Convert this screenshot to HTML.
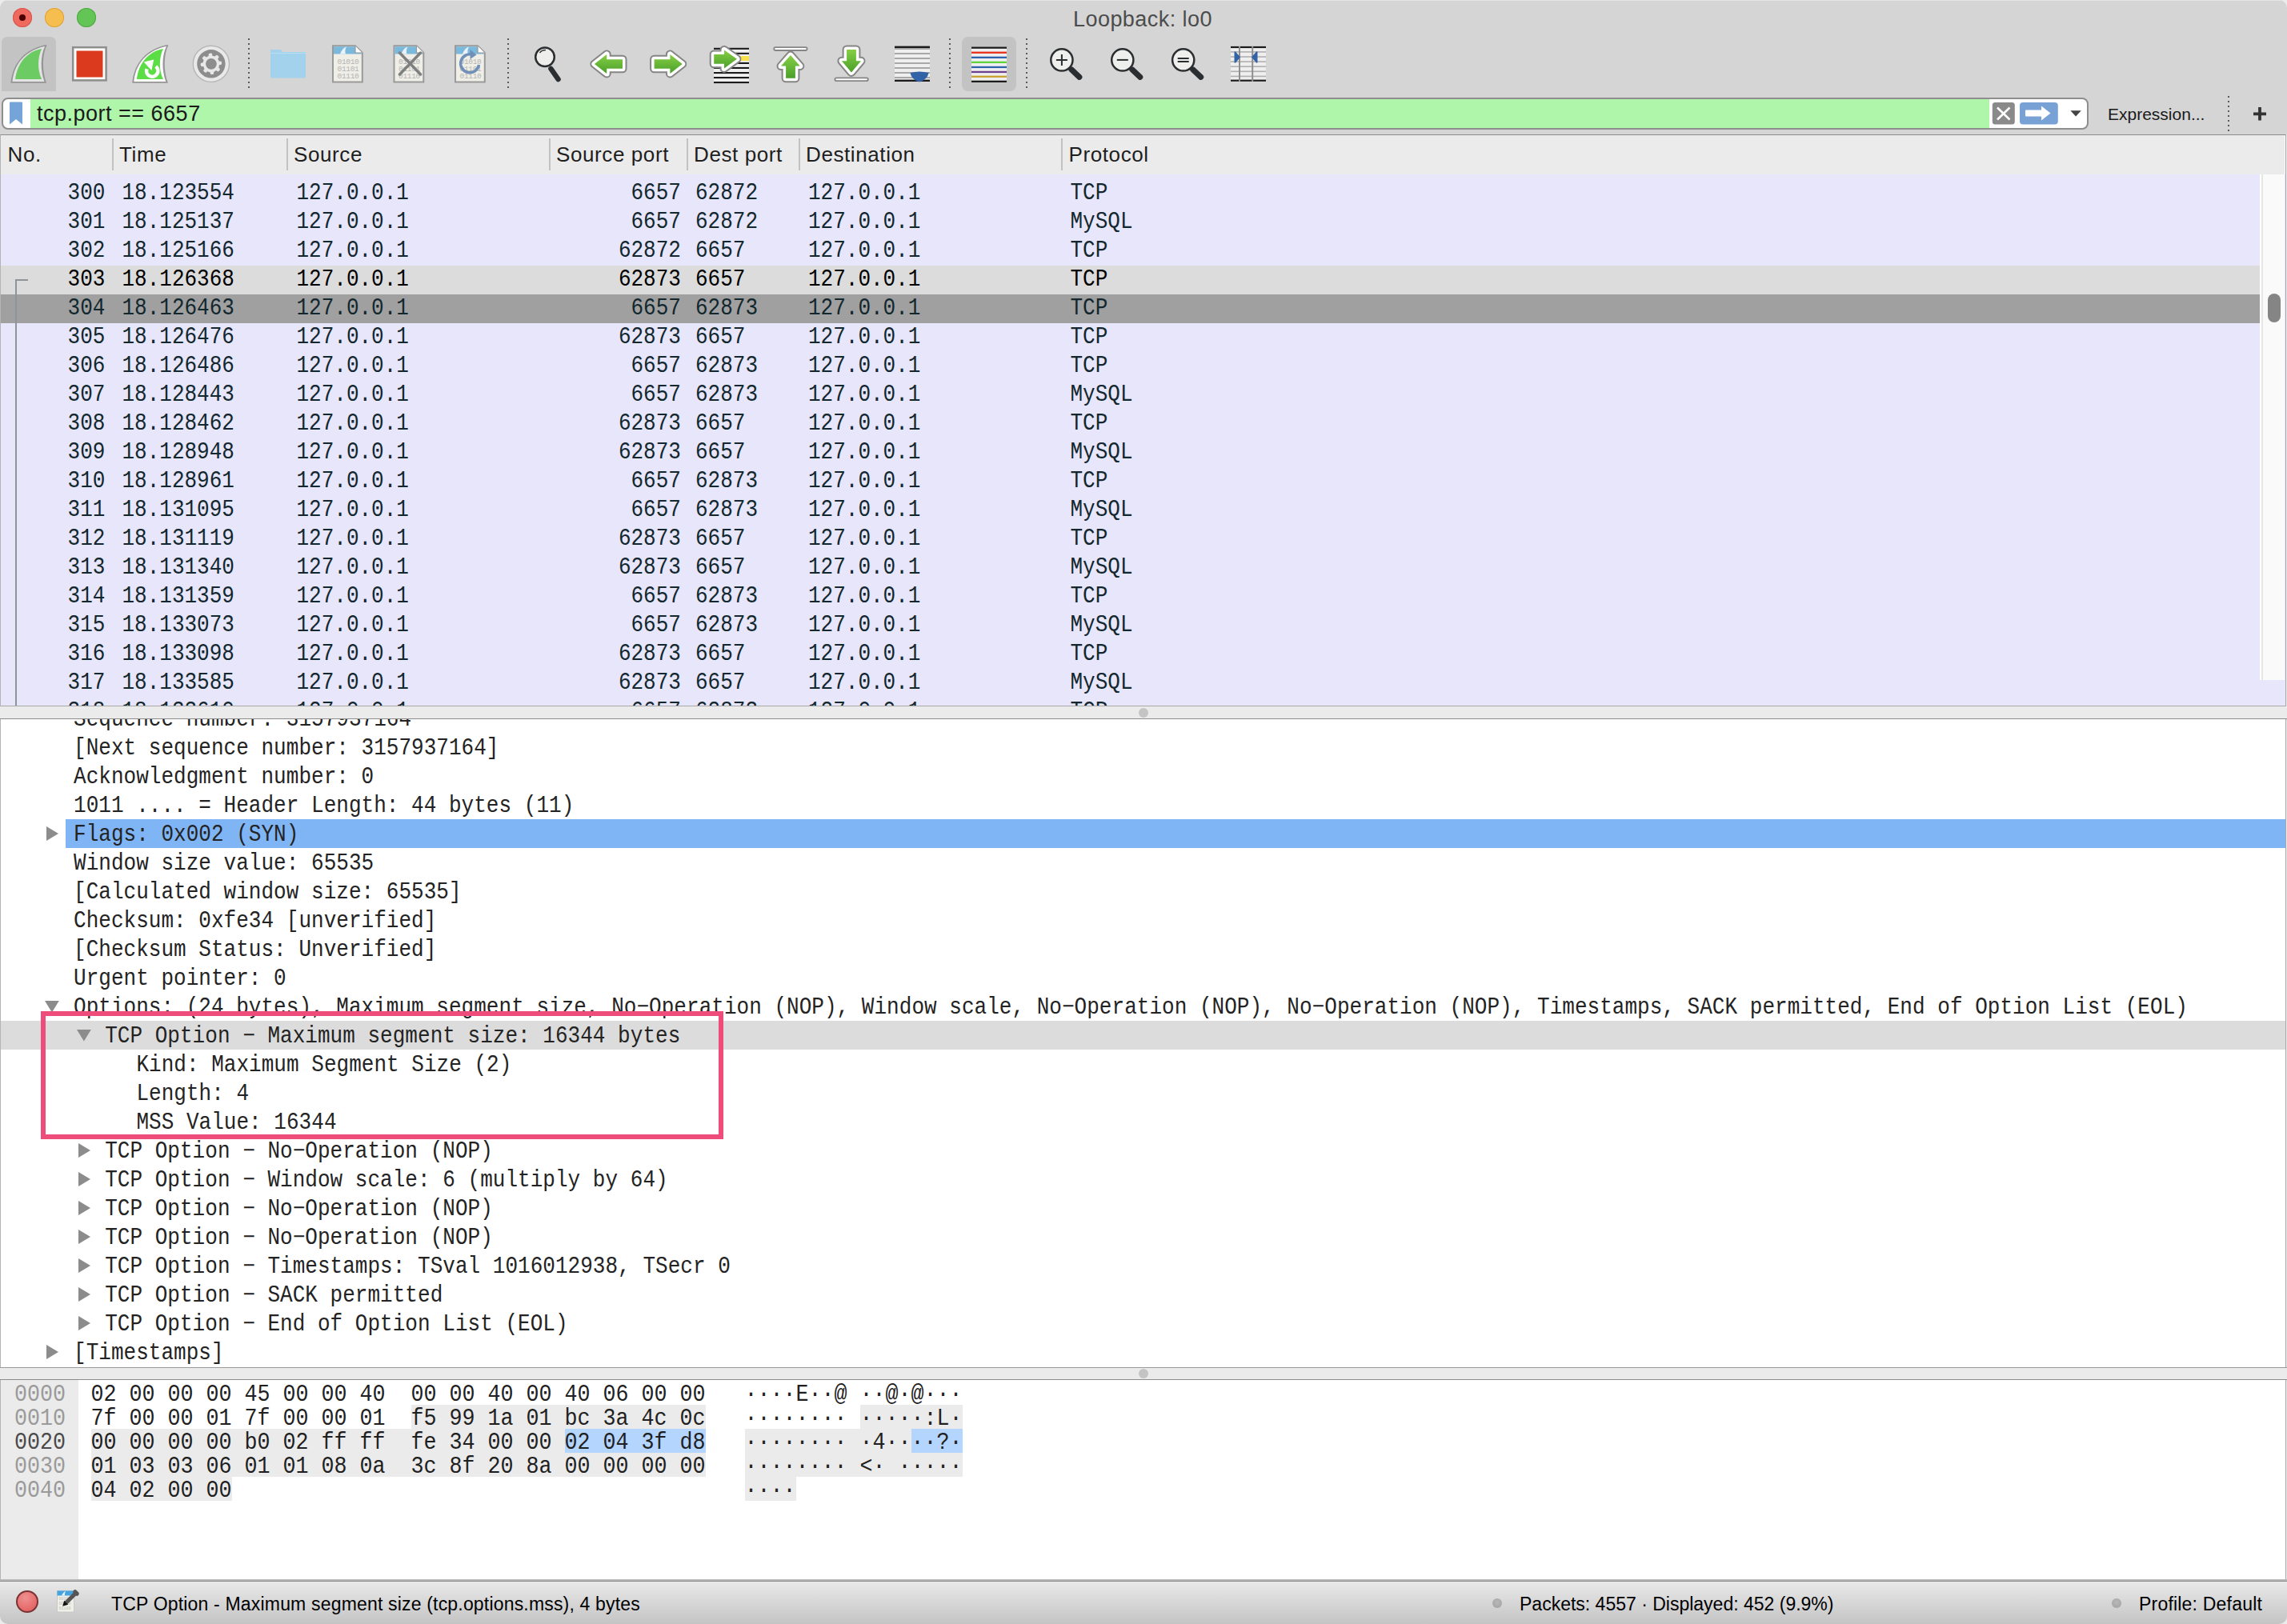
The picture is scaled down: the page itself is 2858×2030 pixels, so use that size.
<!DOCTYPE html>
<html><head><meta charset="utf-8"><title>Wireshark</title><style>
*{margin:0;padding:0;box-sizing:border-box}
html,body{width:2858px;height:2030px;overflow:hidden;background:#ececec}
body{position:relative;font-family:"Liberation Sans", sans-serif}
.a{position:absolute}
.m{font-family:"Liberation Mono", monospace;white-space:pre;position:absolute;font-size:26px;line-height:36px;transform-origin:0 24px;transform:scaleY(1.11);margin-top:2px}
.hx{font-size:26.67px;transform:scaleY(1.09);margin-top:4px}
.s{font-family:"Liberation Sans", sans-serif;white-space:pre;position:absolute}
</style></head>
<body>
<div class="a" style="left:0;top:0;width:2858px;height:168px;background:#d5d5d5;border-radius:10px 10px 0 0"></div>
<div class="a" style="left:8px;top:0;width:2842px;height:1px;background:#e6e6e6"></div>
<div class="a" style="left:16px;top:10px;width:24px;height:24px;border-radius:50%;background:#ee6a5f;box-shadow:inset 0 0 0 1px #d9534a"></div>
<div class="a" style="left:56px;top:10px;width:24px;height:24px;border-radius:50%;background:#f5be4f;box-shadow:inset 0 0 0 1px #dea236"></div>
<div class="a" style="left:96px;top:10px;width:24px;height:24px;border-radius:50%;background:#62c555;box-shadow:inset 0 0 0 1px #4ea843"></div>
<div class="a" style="left:24px;top:18px;width:8px;height:8px;border-radius:50%;background:#4d0000"></div>
<svg class="a" style="left:0;top:0" width="1600" height="122" viewBox="0 0 1600 122">
<defs><linearGradient id="gA" x1="0" y1="0" x2="0" y2="1"><stop offset="0" stop-color="#86cf45"/><stop offset="1" stop-color="#4a9f2a"/></linearGradient><linearGradient id="gF" x1="0" y1="0" x2="0" y2="1"><stop offset="0" stop-color="#7fd46f"/><stop offset="1" stop-color="#66c45b"/></linearGradient><pattern id="ln" width="10" height="6" patternUnits="userSpaceOnUse"><rect width="10" height="6" fill="#efefef"/><rect y="0" width="10" height="2" fill="#a8a8a8"/></pattern></defs>
<path d="M2 114 L2 54 Q2 46 10 46 L62 46 Q70 46 70 54 L70 114 Z" fill="#c3c3c3"/>
<rect x="1202" y="46" width="68" height="68" rx="8" fill="#c3c3c3"/>
<g transform="translate(-151.8,0)">
<path d="M165.3 103.7 C167 84 178 63 207.5 56.2 L210.5 56.2 C204.5 68 204 88 209.9 103.7 Z" fill="#959595"/><path d="M167.3 101.9 C169.2 83 180 64.2 207.2 57.9 L207.9 57.9 C202.3 69 202 88 207.3 101.9 Z" fill="#e4e4e4"/><path d="M170.9 99 C173 80 185 64 204 60.9 C198.5 72 198.5 88 204 99 Z" fill="#6dcb63"/>
</g>
<path d="M165.3 103.7 C167 84 178 63 207.5 56.2 L210.5 56.2 C204.5 68 204 88 209.9 103.7 Z" fill="#959595"/><path d="M167.3 101.9 C169.2 83 180 64.2 207.2 57.9 L207.9 57.9 C202.3 69 202 88 207.3 101.9 Z" fill="#ffffff"/><path d="M170.9 99 C173 80 185 64 204 60.9 C198.5 72 198.5 88 204 99 Z" fill="#5bdd45"/>
<path d="M183.5 86.2 A7.15 7.15 0 1 0 194.8 83.1" fill="none" stroke="#fff" stroke-width="4.5"/>
<path d="M179.7 77.4 L192.2 74.4 L189.4 88 Z" fill="#fff"/>
<rect x="91.2" y="59.2" width="41.4" height="41.2" fill="#fff" stroke="#8e8e8e" stroke-width="2.5"/>
<rect x="95.5" y="63.5" width="33" height="33" fill="#dc3a1f"/>
<circle cx="263.9" cy="79.8" r="22.6" fill="#e9e9e9" stroke="#b6b6b6" stroke-width="1.4"/>
<circle cx="263.9" cy="79.8" r="17.7" fill="#8d8d8d"/>
<rect x="261.6" y="66.6" width="4.6" height="5" rx="1.6" transform="rotate(-5 263.9 79.8)" fill="#e8e8e8"/><rect x="261.6" y="66.6" width="4.6" height="5" rx="1.6" transform="rotate(40 263.9 79.8)" fill="#e8e8e8"/><rect x="261.6" y="66.6" width="4.6" height="5" rx="1.6" transform="rotate(85 263.9 79.8)" fill="#e8e8e8"/><rect x="261.6" y="66.6" width="4.6" height="5" rx="1.6" transform="rotate(130 263.9 79.8)" fill="#e8e8e8"/><rect x="261.6" y="66.6" width="4.6" height="5" rx="1.6" transform="rotate(175 263.9 79.8)" fill="#e8e8e8"/><rect x="261.6" y="66.6" width="4.6" height="5" rx="1.6" transform="rotate(220 263.9 79.8)" fill="#e8e8e8"/><rect x="261.6" y="66.6" width="4.6" height="5" rx="1.6" transform="rotate(265 263.9 79.8)" fill="#e8e8e8"/><rect x="261.6" y="66.6" width="4.6" height="5" rx="1.6" transform="rotate(310 263.9 79.8)" fill="#e8e8e8"/>
<circle cx="263.9" cy="79.8" r="10.4" fill="#e8e8e8"/>
<circle cx="263.9" cy="79.8" r="6.9" fill="#8d8d8d"/>
<line x1="311" y1="48" x2="311" y2="110" stroke="#5a5a5a" stroke-width="2" stroke-dasharray="2 4"/>
<line x1="635" y1="48" x2="635" y2="110" stroke="#5a5a5a" stroke-width="2" stroke-dasharray="2 4"/>
<line x1="1187" y1="48" x2="1187" y2="110" stroke="#5a5a5a" stroke-width="2" stroke-dasharray="2 4"/>
<line x1="1283" y1="48" x2="1283" y2="110" stroke="#5a5a5a" stroke-width="2" stroke-dasharray="2 4"/>
<path d="M338 65 L338 62.5 Q338 62 339 62 L351 62 L353 65 L382 65 L382 96 Q382 97.5 380.5 97.5 L339.5 97.5 Q338 97.5 338 96 Z" fill="#a3d2ec"/>
<rect x="338" y="66" width="44" height="1" fill="#b9def2"/>
<g transform="translate(415,0)"><path d="M1 57.2 L29 57.2 L37.8 66 L37.8 102.6 L1 102.6 Z" fill="#efefe8" stroke="#9a9a9a" stroke-width="2"/><path d="M2 58.2 L28.6 58.2 L36.8 66.4 L36.8 67.5 L2 67.5 Z" fill="#7ab8dc"/><path d="M10 67.5 C12 62 15 59.5 18 58.5 C16 62 16 65 17 67.5 Z" fill="#e8f2f8"/><path d="M29 57.5 L29 66 L37.5 66" fill="#fff" stroke="#9a9a9a" stroke-width="1.2"/><text x="6.5" y="80" font-family="Liberation Mono" font-size="9.5" fill="#b4b4b4" letter-spacing="-0.3">01010</text><text x="6.5" y="89" font-family="Liberation Mono" font-size="9.5" fill="#b4b4b4" letter-spacing="-0.3">01101</text><text x="6.5" y="98" font-family="Liberation Mono" font-size="9.5" fill="#b4b4b4" letter-spacing="-0.3">01110</text></g>
<g transform="translate(491.5,0)"><path d="M1 57.2 L29 57.2 L37.8 66 L37.8 102.6 L1 102.6 Z" fill="#efefe8" stroke="#9a9a9a" stroke-width="2"/><path d="M2 58.2 L28.6 58.2 L36.8 66.4 L36.8 67.5 L2 67.5 Z" fill="#7ab8dc"/><path d="M10 67.5 C12 62 15 59.5 18 58.5 C16 62 16 65 17 67.5 Z" fill="#e8f2f8"/><path d="M29 57.5 L29 66 L37.5 66" fill="#fff" stroke="#9a9a9a" stroke-width="1.2"/><text x="6.5" y="80" font-family="Liberation Mono" font-size="9.5" fill="#b4b4b4" letter-spacing="-0.3">01010</text><text x="6.5" y="89" font-family="Liberation Mono" font-size="9.5" fill="#b4b4b4" letter-spacing="-0.3">01101</text><text x="6.5" y="98" font-family="Liberation Mono" font-size="9.5" fill="#b4b4b4" letter-spacing="-0.3">01110</text><path d="M8 66 L34 93 M34 66 L8 93" stroke="#7f7f7f" stroke-width="3.5" stroke-linecap="round"/></g>
<g transform="translate(568,0)"><path d="M1 57.2 L29 57.2 L37.8 66 L37.8 102.6 L1 102.6 Z" fill="#efefe8" stroke="#9a9a9a" stroke-width="2"/><path d="M2 58.2 L28.6 58.2 L36.8 66.4 L36.8 67.5 L2 67.5 Z" fill="#7ab8dc"/><path d="M10 67.5 C12 62 15 59.5 18 58.5 C16 62 16 65 17 67.5 Z" fill="#e8f2f8"/><path d="M29 57.5 L29 66 L37.5 66" fill="#fff" stroke="#9a9a9a" stroke-width="1.2"/><text x="6.5" y="80" font-family="Liberation Mono" font-size="9.5" fill="#b4b4b4" letter-spacing="-0.3">01010</text><text x="6.5" y="89" font-family="Liberation Mono" font-size="9.5" fill="#b4b4b4" letter-spacing="-0.3">01101</text><text x="6.5" y="98" font-family="Liberation Mono" font-size="9.5" fill="#b4b4b4" letter-spacing="-0.3">01110</text><path d="M30.5 81 A 11.5 11.5 0 1 1 23 68.5" fill="none" stroke="#7190b8" stroke-width="3.5"/><path d="M19.5 62 L27.5 68.5 L19.5 74 Z" fill="#7190b8"/></g>
<line x1="688.5" y1="86" x2="697.5" y2="99" stroke="#2b2e30" stroke-width="6.5" stroke-linecap="round"/>
<circle cx="681" cy="71.3" r="11.8" fill="#eeeeec" stroke="#2b2e30" stroke-width="2.5"/>
<path d="M674.5 66 Q677 62.5 682 62.5" fill="none" stroke="#2b2e30" stroke-width="1.3"/>
<path d="M742.9 80 L758.2 68 L758.2 74.2 L778 74.2 L778 85.8 L758.2 85.8 L758.2 91.9 Z" fill="#888" stroke="#858585" stroke-width="11" stroke-linejoin="round"/><path d="M742.9 80 L758.2 68 L758.2 74.2 L778 74.2 L778 85.8 L758.2 85.8 L758.2 91.9 Z" fill="#fff" stroke="#ffffff" stroke-width="7" stroke-linejoin="round"/><path d="M742.9 80 L758.2 68 L758.2 74.2 L778 74.2 L778 85.8 L758.2 85.8 L758.2 91.9 Z" fill="url(#gA)"/>
<path d="M852.7 80 L837.4 68 L837.4 74.2 L817.6 74.2 L817.6 85.8 L837.4 85.8 L837.4 91.9 Z" fill="#888" stroke="#858585" stroke-width="11" stroke-linejoin="round"/><path d="M852.7 80 L837.4 68 L837.4 74.2 L817.6 74.2 L817.6 85.8 L837.4 85.8 L837.4 91.9 Z" fill="#fff" stroke="#ffffff" stroke-width="7" stroke-linejoin="round"/><path d="M852.7 80 L837.4 68 L837.4 74.2 L817.6 74.2 L817.6 85.8 L837.4 85.8 L837.4 91.9 Z" fill="url(#gA)"/>
<rect x="892" y="60" width="44" height="44" fill="#efefef"/>
<rect x="892" y="59.8" width="44" height="2.1" fill="#1b1b1b"/>
<rect x="892" y="65.8" width="44" height="2.1" fill="#1b1b1b"/>
<rect x="892" y="77.9" width="44" height="2.1" fill="#1b1b1b"/>
<rect x="892" y="83.9" width="44" height="2.1" fill="#1b1b1b"/>
<rect x="892" y="90.0" width="44" height="2.1" fill="#1b1b1b"/>
<rect x="892" y="96.0" width="44" height="2.1" fill="#1b1b1b"/>
<rect x="892" y="102.0" width="44" height="2.1" fill="#1b1b1b"/>
<rect x="892" y="71.9" width="31" height="2.1" fill="#1b1b1b"/>
<rect x="923" y="70" width="13" height="6" fill="#f8e14c"/>
<path d="M920.9 73.7 L905 62.4 L905 67.9 L892.2 67.9 L892.2 79.8 L905 79.8 L905 85.4 Z" fill="#888" stroke="#858585" stroke-width="11" stroke-linejoin="round"/><path d="M920.9 73.7 L905 62.4 L905 67.9 L892.2 67.9 L892.2 79.8 L905 79.8 L905 85.4 Z" fill="#fff" stroke="#ffffff" stroke-width="7" stroke-linejoin="round"/><path d="M920.9 73.7 L905 62.4 L905 67.9 L892.2 67.9 L892.2 79.8 L905 79.8 L905 85.4 Z" fill="url(#gA)"/>
<rect x="967.2" y="59.2" width="41.4" height="3.8" rx="1.9" fill="#fff" stroke="#858585" stroke-width="1.8"/>
<path d="M987.9 69.1 L999.8 82.6 L993.9 82.6 L993.9 97.8 L982.1 97.8 L982.1 82.6 L976 82.6 Z" fill="#888" stroke="#858585" stroke-width="11" stroke-linejoin="round"/><path d="M987.9 69.1 L999.8 82.6 L993.9 82.6 L993.9 97.8 L982.1 97.8 L982.1 82.6 L976 82.6 Z" fill="#fff" stroke="#ffffff" stroke-width="7" stroke-linejoin="round"/><path d="M987.9 69.1 L999.8 82.6 L993.9 82.6 L993.9 97.8 L982.1 97.8 L982.1 82.6 L976 82.6 Z" fill="url(#gA)"/>
<path d="M1063.9 90.4 L1076 76.2 L1069.9 76.2 L1069.9 61.9 L1058.1 61.9 L1058.1 76.2 L1051.9 76.2 Z" fill="#888" stroke="#858585" stroke-width="11" stroke-linejoin="round"/><path d="M1063.9 90.4 L1076 76.2 L1069.9 76.2 L1069.9 61.9 L1058.1 61.9 L1058.1 76.2 L1051.9 76.2 Z" fill="#fff" stroke="#ffffff" stroke-width="7" stroke-linejoin="round"/><path d="M1063.9 90.4 L1076 76.2 L1069.9 76.2 L1069.9 61.9 L1058.1 61.9 L1058.1 76.2 L1051.9 76.2 Z" fill="url(#gA)"/>
<rect x="1043.4" y="97.3" width="41.4" height="3.8" rx="1.9" fill="#fff" stroke="#858585" stroke-width="1.8"/>
<rect x="1118" y="58" width="44" height="44" fill="url(#ln)"/>
<rect x="1118" y="57.6" width="44" height="2.4" fill="#1b1b1b"/>
<rect x="1118" y="99.6" width="44" height="2.4" fill="#1b1b1b"/>
<path d="M1137.5 91 Q1149 88 1160.5 91 Q1159 99.5 1149 102.5 Q1139 99.5 1137.5 91 Z" fill="#3263a6"/>
<rect x="1214" y="58.5" width="44" height="44" fill="#efefef"/>
<rect x="1214" y="58.5" width="44" height="2.3" fill="#1b1b1b"/>
<rect x="1214" y="64.6" width="44" height="2.3" fill="#e8301c"/>
<rect x="1214" y="70.7" width="44" height="2.3" fill="#2f62ad"/>
<rect x="1214" y="76.7" width="44" height="2.3" fill="#60d23a"/>
<rect x="1214" y="82.8" width="44" height="2.3" fill="#2f62ad"/>
<rect x="1214" y="88.8" width="44" height="2.3" fill="#6e3f8e"/>
<rect x="1214" y="94.6" width="44" height="2.3" fill="#c8a22e"/>
<rect x="1214" y="100.7" width="44" height="2.3" fill="#1b1b1b"/>
<line x1="1338.9" y1="86.9" x2="1348.9" y2="96.4" stroke="#2b2e30" stroke-width="7" stroke-linecap="round"/><circle cx="1326.9" cy="74.9" r="13.6" fill="#efefed" stroke="#2b2e30" stroke-width="2.5"/><path d="M1319.9 74.9 L1333.9 74.9 M1326.9 67.9 L1326.9 81.9" stroke="#2b2e30" stroke-width="2"/>
<line x1="1414.8" y1="86.9" x2="1424.8" y2="96.4" stroke="#2b2e30" stroke-width="7" stroke-linecap="round"/><circle cx="1402.8" cy="74.9" r="13.6" fill="#efefed" stroke="#2b2e30" stroke-width="2.5"/><path d="M1395.8 74.9 L1409.8 74.9" stroke="#2b2e30" stroke-width="2"/>
<line x1="1490.7" y1="86.9" x2="1500.7" y2="96.4" stroke="#2b2e30" stroke-width="7" stroke-linecap="round"/><circle cx="1478.7" cy="74.9" r="13.6" fill="#efefed" stroke="#2b2e30" stroke-width="2.5"/><path d="M1471.7 72.9 L1485.7 72.9 M1471.7 76.9 L1485.7 76.9" stroke="#2b2e30" stroke-width="2"/>
<rect x="1538" y="58" width="44" height="44" fill="#efefef"/>
<rect x="1538" y="64.1" width="44" height="1.6" fill="#b0b0b0"/>
<rect x="1538" y="70.2" width="44" height="1.6" fill="#b0b0b0"/>
<rect x="1538" y="76.3" width="44" height="1.6" fill="#b0b0b0"/>
<rect x="1538" y="82.4" width="44" height="1.6" fill="#b0b0b0"/>
<rect x="1538" y="88.5" width="44" height="1.6" fill="#b0b0b0"/>
<rect x="1538" y="94.6" width="44" height="1.6" fill="#b0b0b0"/>
<rect x="1538" y="57.9" width="44" height="2.2" fill="#1b1b1b"/>
<rect x="1538" y="99.6" width="44" height="2.2" fill="#1b1b1b"/>
<rect x="1548" y="58" width="2" height="44" fill="#8e8e8e"/>
<rect x="1564.2" y="58" width="2" height="44" fill="#8e8e8e"/>
<path d="M1542.5 65 Q1543 64 1544 64.5 L1550 71.5 L1544 78.5 Q1543 79 1542.5 78 Z" fill="#3263a6"/>
<path d="M1571.5 65 Q1571 64 1570 64.5 L1564 71.5 L1570 78.5 Q1571 79 1571.5 78 Z" fill="#3263a6"/>
</svg>
<div class="s" style="left:1341px;top:8px;font-size:27px;line-height:32px;color:#4c4c4c;letter-spacing:0.45px">Loopback: lo0</div>
<div class="a" style="left:2px;top:122px;width:2608px;height:40px;border-radius:8px;background:#fff;border:2px solid #8e8e8e"></div>
<div class="a" style="left:38px;top:124px;width:2448px;height:36px;background:#aff5aa"></div>
<div class="s" style="left:46px;top:127px;font-size:27px;line-height:30px;color:#1a1a1a;letter-spacing:0.5px">tcp.port == 6657</div>
<div class="s" style="left:2634px;top:128px;font-size:21px;line-height:30px;color:#1a1a1a">Expression...</div>
<svg class="a" style="left:0;top:118px" width="2858" height="50" viewBox="0 118 2858 50"><path d="M12 128 Q12 127.5 13 127.5 L27 127.5 Q28 127.5 28 128.5 L28 155.5 L20 149 L12 155.5 Z" fill="#74a4d8"/><rect x="2489.8" y="128" width="28" height="27.6" rx="3.5" fill="#8a8a8a"/><path d="M2496 134.5 L2511.5 149.5 M2511.5 134.5 L2496 149.5" stroke="#fff" stroke-width="2.6"/><rect x="2524" y="128" width="47.8" height="27.6" rx="4" fill="#78a2d6"/><path d="M2532 137.5 L2551 137.5 L2551 132.5 L2562.5 141.5 L2551 150.5 L2551 145.5 L2532 145.5 Q2531 145.5 2531 144.5 L2531 138.5 Q2531 137.5 2532 137.5 Z" fill="#fff"/><path d="M2587.4 138.3 L2600.8 138.3 L2594.1 145.6 Z" fill="#444"/><line x1="2785" y1="120" x2="2785" y2="165" stroke="#5a5a5a" stroke-width="2" stroke-dasharray="2 4"/><path d="M2816 142.3 L2832 142.3 M2824 134 L2824 150.5" stroke="#333" stroke-width="3.8"/></svg>
<div class="a" style="left:0;top:168px;width:2857px;height:715px;background:#fafafa;border-top:1px solid #8c8c8c;border-left:1px solid #b4b4b4;border-right:1px solid #a8a8a8;border-bottom:1px solid #a8a8a8"></div>
<div class="a" style="left:1px;top:169px;width:2854px;height:49px;background:#ebebeb"></div>
<div class="a" style="left:140px;top:173px;width:2px;height:40px;background:#c2c2c2"></div>
<div class="a" style="left:357.5px;top:173px;width:2px;height:40px;background:#c2c2c2"></div>
<div class="a" style="left:686px;top:173px;width:2px;height:40px;background:#c2c2c2"></div>
<div class="a" style="left:858px;top:173px;width:2px;height:40px;background:#c2c2c2"></div>
<div class="a" style="left:998px;top:173px;width:2px;height:40px;background:#c2c2c2"></div>
<div class="a" style="left:1325.5px;top:173px;width:2px;height:40px;background:#c2c2c2"></div>
<div class="s" style="left:9.5px;top:178px;font-size:26px;line-height:30px;color:#1e1e1e;letter-spacing:0.6px">No.</div>
<div class="s" style="left:149px;top:178px;font-size:26px;line-height:30px;color:#1e1e1e;letter-spacing:0.6px">Time</div>
<div class="s" style="left:367px;top:178px;font-size:26px;line-height:30px;color:#1e1e1e;letter-spacing:0.6px">Source</div>
<div class="s" style="left:695px;top:178px;font-size:26px;line-height:30px;color:#1e1e1e;letter-spacing:0.6px">Source port</div>
<div class="s" style="left:867px;top:178px;font-size:26px;line-height:30px;color:#1e1e1e;letter-spacing:0.6px">Dest port</div>
<div class="s" style="left:1007px;top:178px;font-size:26px;line-height:30px;color:#1e1e1e;letter-spacing:0.6px">Destination</div>
<div class="s" style="left:1335.5px;top:178px;font-size:26px;line-height:30px;color:#1e1e1e;letter-spacing:0.6px">Protocol</div>
<div class="a" style="left:1px;top:218px;width:2855px;height:664px;overflow:hidden;background:#e7e6fb">
<div class="a" style="left:0;top:6px;width:2823px;height:36px;background:#e7e6fb;color:#12272e">
<div class="m" style="left:83.6px;top:-2px">300</div>
<div class="m" style="left:151.5px;top:-2px">18.123554</div>
<div class="m" style="left:369.5px;top:-2px">127.0.0.1</div>
<div class="m" style="left:787.5px;top:-2px">6657</div>
<div class="m" style="left:868.0px;top:-2px">62872</div>
<div class="m" style="left:1009.0px;top:-2px">127.0.0.1</div>
<div class="m" style="left:1336.5px;top:-2px">TCP</div>
</div>
<div class="a" style="left:0;top:42px;width:2823px;height:36px;background:#e7e6fb;color:#12272e">
<div class="m" style="left:83.6px;top:-2px">301</div>
<div class="m" style="left:151.5px;top:-2px">18.125137</div>
<div class="m" style="left:369.5px;top:-2px">127.0.0.1</div>
<div class="m" style="left:787.5px;top:-2px">6657</div>
<div class="m" style="left:868.0px;top:-2px">62872</div>
<div class="m" style="left:1009.0px;top:-2px">127.0.0.1</div>
<div class="m" style="left:1336.5px;top:-2px">MySQL</div>
</div>
<div class="a" style="left:0;top:78px;width:2823px;height:36px;background:#e7e6fb;color:#12272e">
<div class="m" style="left:83.6px;top:-2px">302</div>
<div class="m" style="left:151.5px;top:-2px">18.125166</div>
<div class="m" style="left:369.5px;top:-2px">127.0.0.1</div>
<div class="m" style="left:771.9px;top:-2px">62872</div>
<div class="m" style="left:868.0px;top:-2px">6657</div>
<div class="m" style="left:1009.0px;top:-2px">127.0.0.1</div>
<div class="m" style="left:1336.5px;top:-2px">TCP</div>
</div>
<div class="a" style="left:0;top:114px;width:2823px;height:36px;background:#dcdcdc;color:#000">
<div class="m" style="left:83.6px;top:-2px">303</div>
<div class="m" style="left:151.5px;top:-2px">18.126368</div>
<div class="m" style="left:369.5px;top:-2px">127.0.0.1</div>
<div class="m" style="left:771.9px;top:-2px">62873</div>
<div class="m" style="left:868.0px;top:-2px">6657</div>
<div class="m" style="left:1009.0px;top:-2px">127.0.0.1</div>
<div class="m" style="left:1336.5px;top:-2px">TCP</div>
</div>
<div class="a" style="left:0;top:150px;width:2823px;height:36px;background:#a0a0a0;color:#12272e">
<div class="m" style="left:83.6px;top:-2px">304</div>
<div class="m" style="left:151.5px;top:-2px">18.126463</div>
<div class="m" style="left:369.5px;top:-2px">127.0.0.1</div>
<div class="m" style="left:787.5px;top:-2px">6657</div>
<div class="m" style="left:868.0px;top:-2px">62873</div>
<div class="m" style="left:1009.0px;top:-2px">127.0.0.1</div>
<div class="m" style="left:1336.5px;top:-2px">TCP</div>
</div>
<div class="a" style="left:0;top:186px;width:2823px;height:36px;background:#e7e6fb;color:#12272e">
<div class="m" style="left:83.6px;top:-2px">305</div>
<div class="m" style="left:151.5px;top:-2px">18.126476</div>
<div class="m" style="left:369.5px;top:-2px">127.0.0.1</div>
<div class="m" style="left:771.9px;top:-2px">62873</div>
<div class="m" style="left:868.0px;top:-2px">6657</div>
<div class="m" style="left:1009.0px;top:-2px">127.0.0.1</div>
<div class="m" style="left:1336.5px;top:-2px">TCP</div>
</div>
<div class="a" style="left:0;top:222px;width:2823px;height:36px;background:#e7e6fb;color:#12272e">
<div class="m" style="left:83.6px;top:-2px">306</div>
<div class="m" style="left:151.5px;top:-2px">18.126486</div>
<div class="m" style="left:369.5px;top:-2px">127.0.0.1</div>
<div class="m" style="left:787.5px;top:-2px">6657</div>
<div class="m" style="left:868.0px;top:-2px">62873</div>
<div class="m" style="left:1009.0px;top:-2px">127.0.0.1</div>
<div class="m" style="left:1336.5px;top:-2px">TCP</div>
</div>
<div class="a" style="left:0;top:258px;width:2823px;height:36px;background:#e7e6fb;color:#12272e">
<div class="m" style="left:83.6px;top:-2px">307</div>
<div class="m" style="left:151.5px;top:-2px">18.128443</div>
<div class="m" style="left:369.5px;top:-2px">127.0.0.1</div>
<div class="m" style="left:787.5px;top:-2px">6657</div>
<div class="m" style="left:868.0px;top:-2px">62873</div>
<div class="m" style="left:1009.0px;top:-2px">127.0.0.1</div>
<div class="m" style="left:1336.5px;top:-2px">MySQL</div>
</div>
<div class="a" style="left:0;top:294px;width:2823px;height:36px;background:#e7e6fb;color:#12272e">
<div class="m" style="left:83.6px;top:-2px">308</div>
<div class="m" style="left:151.5px;top:-2px">18.128462</div>
<div class="m" style="left:369.5px;top:-2px">127.0.0.1</div>
<div class="m" style="left:771.9px;top:-2px">62873</div>
<div class="m" style="left:868.0px;top:-2px">6657</div>
<div class="m" style="left:1009.0px;top:-2px">127.0.0.1</div>
<div class="m" style="left:1336.5px;top:-2px">TCP</div>
</div>
<div class="a" style="left:0;top:330px;width:2823px;height:36px;background:#e7e6fb;color:#12272e">
<div class="m" style="left:83.6px;top:-2px">309</div>
<div class="m" style="left:151.5px;top:-2px">18.128948</div>
<div class="m" style="left:369.5px;top:-2px">127.0.0.1</div>
<div class="m" style="left:771.9px;top:-2px">62873</div>
<div class="m" style="left:868.0px;top:-2px">6657</div>
<div class="m" style="left:1009.0px;top:-2px">127.0.0.1</div>
<div class="m" style="left:1336.5px;top:-2px">MySQL</div>
</div>
<div class="a" style="left:0;top:366px;width:2823px;height:36px;background:#e7e6fb;color:#12272e">
<div class="m" style="left:83.6px;top:-2px">310</div>
<div class="m" style="left:151.5px;top:-2px">18.128961</div>
<div class="m" style="left:369.5px;top:-2px">127.0.0.1</div>
<div class="m" style="left:787.5px;top:-2px">6657</div>
<div class="m" style="left:868.0px;top:-2px">62873</div>
<div class="m" style="left:1009.0px;top:-2px">127.0.0.1</div>
<div class="m" style="left:1336.5px;top:-2px">TCP</div>
</div>
<div class="a" style="left:0;top:402px;width:2823px;height:36px;background:#e7e6fb;color:#12272e">
<div class="m" style="left:83.6px;top:-2px">311</div>
<div class="m" style="left:151.5px;top:-2px">18.131095</div>
<div class="m" style="left:369.5px;top:-2px">127.0.0.1</div>
<div class="m" style="left:787.5px;top:-2px">6657</div>
<div class="m" style="left:868.0px;top:-2px">62873</div>
<div class="m" style="left:1009.0px;top:-2px">127.0.0.1</div>
<div class="m" style="left:1336.5px;top:-2px">MySQL</div>
</div>
<div class="a" style="left:0;top:438px;width:2823px;height:36px;background:#e7e6fb;color:#12272e">
<div class="m" style="left:83.6px;top:-2px">312</div>
<div class="m" style="left:151.5px;top:-2px">18.131119</div>
<div class="m" style="left:369.5px;top:-2px">127.0.0.1</div>
<div class="m" style="left:771.9px;top:-2px">62873</div>
<div class="m" style="left:868.0px;top:-2px">6657</div>
<div class="m" style="left:1009.0px;top:-2px">127.0.0.1</div>
<div class="m" style="left:1336.5px;top:-2px">TCP</div>
</div>
<div class="a" style="left:0;top:474px;width:2823px;height:36px;background:#e7e6fb;color:#12272e">
<div class="m" style="left:83.6px;top:-2px">313</div>
<div class="m" style="left:151.5px;top:-2px">18.131340</div>
<div class="m" style="left:369.5px;top:-2px">127.0.0.1</div>
<div class="m" style="left:771.9px;top:-2px">62873</div>
<div class="m" style="left:868.0px;top:-2px">6657</div>
<div class="m" style="left:1009.0px;top:-2px">127.0.0.1</div>
<div class="m" style="left:1336.5px;top:-2px">MySQL</div>
</div>
<div class="a" style="left:0;top:510px;width:2823px;height:36px;background:#e7e6fb;color:#12272e">
<div class="m" style="left:83.6px;top:-2px">314</div>
<div class="m" style="left:151.5px;top:-2px">18.131359</div>
<div class="m" style="left:369.5px;top:-2px">127.0.0.1</div>
<div class="m" style="left:787.5px;top:-2px">6657</div>
<div class="m" style="left:868.0px;top:-2px">62873</div>
<div class="m" style="left:1009.0px;top:-2px">127.0.0.1</div>
<div class="m" style="left:1336.5px;top:-2px">TCP</div>
</div>
<div class="a" style="left:0;top:546px;width:2823px;height:36px;background:#e7e6fb;color:#12272e">
<div class="m" style="left:83.6px;top:-2px">315</div>
<div class="m" style="left:151.5px;top:-2px">18.133073</div>
<div class="m" style="left:369.5px;top:-2px">127.0.0.1</div>
<div class="m" style="left:787.5px;top:-2px">6657</div>
<div class="m" style="left:868.0px;top:-2px">62873</div>
<div class="m" style="left:1009.0px;top:-2px">127.0.0.1</div>
<div class="m" style="left:1336.5px;top:-2px">MySQL</div>
</div>
<div class="a" style="left:0;top:582px;width:2823px;height:36px;background:#e7e6fb;color:#12272e">
<div class="m" style="left:83.6px;top:-2px">316</div>
<div class="m" style="left:151.5px;top:-2px">18.133098</div>
<div class="m" style="left:369.5px;top:-2px">127.0.0.1</div>
<div class="m" style="left:771.9px;top:-2px">62873</div>
<div class="m" style="left:868.0px;top:-2px">6657</div>
<div class="m" style="left:1009.0px;top:-2px">127.0.0.1</div>
<div class="m" style="left:1336.5px;top:-2px">TCP</div>
</div>
<div class="a" style="left:0;top:618px;width:2823px;height:36px;background:#e7e6fb;color:#12272e">
<div class="m" style="left:83.6px;top:-2px">317</div>
<div class="m" style="left:151.5px;top:-2px">18.133585</div>
<div class="m" style="left:369.5px;top:-2px">127.0.0.1</div>
<div class="m" style="left:771.9px;top:-2px">62873</div>
<div class="m" style="left:868.0px;top:-2px">6657</div>
<div class="m" style="left:1009.0px;top:-2px">127.0.0.1</div>
<div class="m" style="left:1336.5px;top:-2px">MySQL</div>
</div>
<div class="a" style="left:0;top:654px;width:2823px;height:36px;background:#e7e6fb;color:#12272e">
<div class="m" style="left:83.6px;top:-2px">318</div>
<div class="m" style="left:151.5px;top:-2px">18.133610</div>
<div class="m" style="left:369.5px;top:-2px">127.0.0.1</div>
<div class="m" style="left:787.5px;top:-2px">6657</div>
<div class="m" style="left:868.0px;top:-2px">62873</div>
<div class="m" style="left:1009.0px;top:-2px">127.0.0.1</div>
<div class="m" style="left:1336.5px;top:-2px">TCP</div>
</div>
<div class="a" style="left:18px;top:131px;width:2px;height:540px;background:#8c969a"></div>
<div class="a" style="left:18px;top:131px;width:16px;height:2px;background:#8c969a"></div>
</div>
<div class="a" style="left:2824px;top:218px;width:3px;height:632px;background:#ffffff"></div>
<div class="a" style="left:2826px;top:218px;width:2px;height:632px;background:#e6e6e6"></div>
<div class="a" style="left:2828px;top:218px;width:27px;height:632px;background:#fafafa"></div>
<div class="a" style="left:2834px;top:367px;width:16px;height:36px;border-radius:8px;background:#858585"></div>
<div class="a" style="left:0;top:883px;width:2858px;height:16px;background:#ebebeb;border-bottom:1px solid #8c8c8c"></div>
<div class="a" style="left:1423px;top:885px;width:12px;height:12px;border-radius:50%;background:#c4c4c4"></div>
<div class="a" style="left:0;top:899px;width:2857px;height:810px;background:#fff;border-left:1px solid #b4b4b4;border-right:1px solid #a8a8a8;overflow:hidden">
<div class="m" style="left:91.0px;top:-19px;color:#232323;letter-spacing:0.03px">Sequence number: 3157937164</div>
<div class="m" style="left:91.0px;top:17px;color:#232323;letter-spacing:0.03px">[Next sequence number: 3157937164]</div>
<div class="m" style="left:91.0px;top:53px;color:#232323;letter-spacing:0.03px">Acknowledgment number: 0</div>
<div class="m" style="left:91.0px;top:89px;color:#232323;letter-spacing:0.03px">1011 .... = Header Length: 44 bytes (11)</div>
<div class="a" style="left:81px;top:125px;width:2780px;height:36px;background:#80b5f5"></div>
<div class="m" style="left:91.0px;top:125px;color:#232323;letter-spacing:0.03px">Flags: 0x002 (SYN)</div>
<svg class="a" style="left:57px;top:134px" width="16" height="19"><path d="M0 0L15 9L0 18Z" fill="#8c8c8c"/></svg>
<div class="m" style="left:91.0px;top:161px;color:#232323;letter-spacing:0.03px">Window size value: 65535</div>
<div class="m" style="left:91.0px;top:197px;color:#232323;letter-spacing:0.03px">[Calculated window size: 65535]</div>
<div class="m" style="left:91.0px;top:233px;color:#232323;letter-spacing:0.03px">Checksum: 0xfe34 [unverified]</div>
<div class="m" style="left:91.0px;top:269px;color:#232323;letter-spacing:0.03px">[Checksum Status: Unverified]</div>
<div class="m" style="left:91.0px;top:305px;color:#232323;letter-spacing:0.03px">Urgent pointer: 0</div>
<div class="m" style="left:91.0px;top:341px;color:#232323;letter-spacing:0.03px">Options: (24 bytes), Maximum segment size, No−Operation (NOP), Window scale, No−Operation (NOP), No−Operation (NOP), Timestamps, SACK permitted, End of Option List (EOL)</div>
<svg class="a" style="left:55px;top:352px" width="19" height="16"><path d="M0 0L17.8 0L8.9 14.4Z" fill="#8c8c8c"/></svg>
<div class="a" style="left:0;top:377px;width:2860px;height:36px;background:#dcdcdc"></div>
<div class="m" style="left:130.2px;top:377px;color:#232323;letter-spacing:0.03px">TCP Option − Maximum segment size: 16344 bytes</div>
<svg class="a" style="left:95px;top:388px" width="19" height="16"><path d="M0 0L17.8 0L8.9 14.4Z" fill="#8c8c8c"/></svg>
<div class="m" style="left:169.4px;top:413px;color:#232323;letter-spacing:0.03px">Kind: Maximum Segment Size (2)</div>
<div class="m" style="left:169.4px;top:449px;color:#232323;letter-spacing:0.03px">Length: 4</div>
<div class="m" style="left:169.4px;top:485px;color:#232323;letter-spacing:0.03px">MSS Value: 16344</div>
<div class="m" style="left:130.2px;top:521px;color:#232323;letter-spacing:0.03px">TCP Option − No−Operation (NOP)</div>
<svg class="a" style="left:97px;top:530px" width="16" height="19"><path d="M0 0L15 9L0 18Z" fill="#8c8c8c"/></svg>
<div class="m" style="left:130.2px;top:557px;color:#232323;letter-spacing:0.03px">TCP Option − Window scale: 6 (multiply by 64)</div>
<svg class="a" style="left:97px;top:566px" width="16" height="19"><path d="M0 0L15 9L0 18Z" fill="#8c8c8c"/></svg>
<div class="m" style="left:130.2px;top:593px;color:#232323;letter-spacing:0.03px">TCP Option − No−Operation (NOP)</div>
<svg class="a" style="left:97px;top:602px" width="16" height="19"><path d="M0 0L15 9L0 18Z" fill="#8c8c8c"/></svg>
<div class="m" style="left:130.2px;top:629px;color:#232323;letter-spacing:0.03px">TCP Option − No−Operation (NOP)</div>
<svg class="a" style="left:97px;top:638px" width="16" height="19"><path d="M0 0L15 9L0 18Z" fill="#8c8c8c"/></svg>
<div class="m" style="left:130.2px;top:665px;color:#232323;letter-spacing:0.03px">TCP Option − Timestamps: TSval 1016012938, TSecr 0</div>
<svg class="a" style="left:97px;top:674px" width="16" height="19"><path d="M0 0L15 9L0 18Z" fill="#8c8c8c"/></svg>
<div class="m" style="left:130.2px;top:701px;color:#232323;letter-spacing:0.03px">TCP Option − SACK permitted</div>
<svg class="a" style="left:97px;top:710px" width="16" height="19"><path d="M0 0L15 9L0 18Z" fill="#8c8c8c"/></svg>
<div class="m" style="left:130.2px;top:737px;color:#232323;letter-spacing:0.03px">TCP Option − End of Option List (EOL)</div>
<svg class="a" style="left:97px;top:746px" width="16" height="19"><path d="M0 0L15 9L0 18Z" fill="#8c8c8c"/></svg>
<div class="m" style="left:91.0px;top:773px;color:#232323;letter-spacing:0.03px">[Timestamps]</div>
<svg class="a" style="left:57px;top:782px" width="16" height="19"><path d="M0 0L15 9L0 18Z" fill="#8c8c8c"/></svg>
</div>
<div class="a" style="left:51px;top:1264px;width:853px;height:160px;border:6px solid #ee4d7b"></div>
<div class="a" style="left:0;top:1709px;width:2858px;height:16px;background:#ebebeb;border-top:1px solid #9a9a9a;border-bottom:1px solid #8c8c8c"></div>
<div class="a" style="left:1423px;top:1711px;width:12px;height:12px;border-radius:50%;background:#c4c4c4"></div>
<div class="a" style="left:0;top:1725px;width:2857px;height:250px;background:#fff;border-left:1px solid #b4b4b4;border-right:1px solid #a8a8a8"></div>
<div class="a" style="left:1px;top:1725px;width:97px;height:249px;background:#ebebeb"></div>
<div class="m hx" style="left:18px;top:1722px;color:#9a9a9a">0000</div>
<div class="m hx" style="left:113.5px;top:1722px;color:#1f1f1f">02</div>
<div class="m hx" style="left:930.5px;top:1722px;color:#1f1f1f">·</div>
<div class="m hx" style="left:161.5px;top:1722px;color:#1f1f1f">00</div>
<div class="m hx" style="left:946.5px;top:1722px;color:#1f1f1f">·</div>
<div class="m hx" style="left:209.5px;top:1722px;color:#1f1f1f">00</div>
<div class="m hx" style="left:962.5px;top:1722px;color:#1f1f1f">·</div>
<div class="m hx" style="left:257.5px;top:1722px;color:#1f1f1f">00</div>
<div class="m hx" style="left:978.5px;top:1722px;color:#1f1f1f">·</div>
<div class="m hx" style="left:305.5px;top:1722px;color:#1f1f1f">45</div>
<div class="m hx" style="left:994.5px;top:1722px;color:#1f1f1f">E</div>
<div class="m hx" style="left:353.5px;top:1722px;color:#1f1f1f">00</div>
<div class="m hx" style="left:1010.5px;top:1722px;color:#1f1f1f">·</div>
<div class="m hx" style="left:401.5px;top:1722px;color:#1f1f1f">00</div>
<div class="m hx" style="left:1026.5px;top:1722px;color:#1f1f1f">·</div>
<div class="m hx" style="left:449.5px;top:1722px;color:#1f1f1f">40</div>
<div class="m hx" style="left:1042.5px;top:1722px;color:#1f1f1f">@</div>
<div class="m hx" style="left:513.5px;top:1722px;color:#1f1f1f">00</div>
<div class="m hx" style="left:1074.5px;top:1722px;color:#1f1f1f">·</div>
<div class="m hx" style="left:561.5px;top:1722px;color:#1f1f1f">00</div>
<div class="m hx" style="left:1090.5px;top:1722px;color:#1f1f1f">·</div>
<div class="m hx" style="left:609.5px;top:1722px;color:#1f1f1f">40</div>
<div class="m hx" style="left:1106.5px;top:1722px;color:#1f1f1f">@</div>
<div class="m hx" style="left:657.5px;top:1722px;color:#1f1f1f">00</div>
<div class="m hx" style="left:1122.5px;top:1722px;color:#1f1f1f">·</div>
<div class="m hx" style="left:705.5px;top:1722px;color:#1f1f1f">40</div>
<div class="m hx" style="left:1138.5px;top:1722px;color:#1f1f1f">@</div>
<div class="m hx" style="left:753.5px;top:1722px;color:#1f1f1f">06</div>
<div class="m hx" style="left:1154.5px;top:1722px;color:#1f1f1f">·</div>
<div class="m hx" style="left:801.5px;top:1722px;color:#1f1f1f">00</div>
<div class="m hx" style="left:1170.5px;top:1722px;color:#1f1f1f">·</div>
<div class="m hx" style="left:849.5px;top:1722px;color:#1f1f1f">00</div>
<div class="m hx" style="left:1186.5px;top:1722px;color:#1f1f1f">·</div>
<div class="a" style="left:514px;top:1756px;width:48px;height:30px;background:#ebebeb"></div>
<div class="a" style="left:1075px;top:1756px;width:16px;height:30px;background:#ebebeb"></div>
<div class="a" style="left:562px;top:1756px;width:48px;height:30px;background:#ebebeb"></div>
<div class="a" style="left:1091px;top:1756px;width:16px;height:30px;background:#ebebeb"></div>
<div class="a" style="left:610px;top:1756px;width:48px;height:30px;background:#ebebeb"></div>
<div class="a" style="left:1107px;top:1756px;width:16px;height:30px;background:#ebebeb"></div>
<div class="a" style="left:658px;top:1756px;width:48px;height:30px;background:#ebebeb"></div>
<div class="a" style="left:1123px;top:1756px;width:16px;height:30px;background:#ebebeb"></div>
<div class="a" style="left:706px;top:1756px;width:48px;height:30px;background:#ebebeb"></div>
<div class="a" style="left:1139px;top:1756px;width:16px;height:30px;background:#ebebeb"></div>
<div class="a" style="left:754px;top:1756px;width:48px;height:30px;background:#ebebeb"></div>
<div class="a" style="left:1155px;top:1756px;width:16px;height:30px;background:#ebebeb"></div>
<div class="a" style="left:802px;top:1756px;width:48px;height:30px;background:#ebebeb"></div>
<div class="a" style="left:1171px;top:1756px;width:16px;height:30px;background:#ebebeb"></div>
<div class="a" style="left:850px;top:1756px;width:32px;height:30px;background:#ebebeb"></div>
<div class="a" style="left:1187px;top:1756px;width:16px;height:30px;background:#ebebeb"></div>
<div class="m hx" style="left:18px;top:1752px;color:#9a9a9a">0010</div>
<div class="m hx" style="left:113.5px;top:1752px;color:#1f1f1f">7f</div>
<div class="m hx" style="left:930.5px;top:1752px;color:#1f1f1f">·</div>
<div class="m hx" style="left:161.5px;top:1752px;color:#1f1f1f">00</div>
<div class="m hx" style="left:946.5px;top:1752px;color:#1f1f1f">·</div>
<div class="m hx" style="left:209.5px;top:1752px;color:#1f1f1f">00</div>
<div class="m hx" style="left:962.5px;top:1752px;color:#1f1f1f">·</div>
<div class="m hx" style="left:257.5px;top:1752px;color:#1f1f1f">01</div>
<div class="m hx" style="left:978.5px;top:1752px;color:#1f1f1f">·</div>
<div class="m hx" style="left:305.5px;top:1752px;color:#1f1f1f">7f</div>
<div class="m hx" style="left:994.5px;top:1752px;color:#1f1f1f">·</div>
<div class="m hx" style="left:353.5px;top:1752px;color:#1f1f1f">00</div>
<div class="m hx" style="left:1010.5px;top:1752px;color:#1f1f1f">·</div>
<div class="m hx" style="left:401.5px;top:1752px;color:#1f1f1f">00</div>
<div class="m hx" style="left:1026.5px;top:1752px;color:#1f1f1f">·</div>
<div class="m hx" style="left:449.5px;top:1752px;color:#1f1f1f">01</div>
<div class="m hx" style="left:1042.5px;top:1752px;color:#1f1f1f">·</div>
<div class="m hx" style="left:513.5px;top:1752px;color:#1f1f1f">f5</div>
<div class="m hx" style="left:1074.5px;top:1752px;color:#1f1f1f">·</div>
<div class="m hx" style="left:561.5px;top:1752px;color:#1f1f1f">99</div>
<div class="m hx" style="left:1090.5px;top:1752px;color:#1f1f1f">·</div>
<div class="m hx" style="left:609.5px;top:1752px;color:#1f1f1f">1a</div>
<div class="m hx" style="left:1106.5px;top:1752px;color:#1f1f1f">·</div>
<div class="m hx" style="left:657.5px;top:1752px;color:#1f1f1f">01</div>
<div class="m hx" style="left:1122.5px;top:1752px;color:#1f1f1f">·</div>
<div class="m hx" style="left:705.5px;top:1752px;color:#1f1f1f">bc</div>
<div class="m hx" style="left:1138.5px;top:1752px;color:#1f1f1f">·</div>
<div class="m hx" style="left:753.5px;top:1752px;color:#1f1f1f">3a</div>
<div class="m hx" style="left:1154.5px;top:1752px;color:#1f1f1f">:</div>
<div class="m hx" style="left:801.5px;top:1752px;color:#1f1f1f">4c</div>
<div class="m hx" style="left:1170.5px;top:1752px;color:#1f1f1f">L</div>
<div class="m hx" style="left:849.5px;top:1752px;color:#1f1f1f">0c</div>
<div class="m hx" style="left:1186.5px;top:1752px;color:#1f1f1f">·</div>
<div class="a" style="left:114px;top:1786px;width:48px;height:30px;background:#ebebeb"></div>
<div class="a" style="left:931px;top:1786px;width:16px;height:30px;background:#ebebeb"></div>
<div class="a" style="left:162px;top:1786px;width:48px;height:30px;background:#ebebeb"></div>
<div class="a" style="left:947px;top:1786px;width:16px;height:30px;background:#ebebeb"></div>
<div class="a" style="left:210px;top:1786px;width:48px;height:30px;background:#ebebeb"></div>
<div class="a" style="left:963px;top:1786px;width:16px;height:30px;background:#ebebeb"></div>
<div class="a" style="left:258px;top:1786px;width:48px;height:30px;background:#ebebeb"></div>
<div class="a" style="left:979px;top:1786px;width:16px;height:30px;background:#ebebeb"></div>
<div class="a" style="left:306px;top:1786px;width:48px;height:30px;background:#ebebeb"></div>
<div class="a" style="left:995px;top:1786px;width:16px;height:30px;background:#ebebeb"></div>
<div class="a" style="left:354px;top:1786px;width:48px;height:30px;background:#ebebeb"></div>
<div class="a" style="left:1011px;top:1786px;width:16px;height:30px;background:#ebebeb"></div>
<div class="a" style="left:402px;top:1786px;width:48px;height:30px;background:#ebebeb"></div>
<div class="a" style="left:1027px;top:1786px;width:16px;height:30px;background:#ebebeb"></div>
<div class="a" style="left:450px;top:1786px;width:64px;height:30px;background:#ebebeb"></div>
<div class="a" style="left:1043px;top:1786px;width:32px;height:30px;background:#ebebeb"></div>
<div class="a" style="left:514px;top:1786px;width:48px;height:30px;background:#ebebeb"></div>
<div class="a" style="left:1075px;top:1786px;width:16px;height:30px;background:#ebebeb"></div>
<div class="a" style="left:562px;top:1786px;width:48px;height:30px;background:#ebebeb"></div>
<div class="a" style="left:1091px;top:1786px;width:16px;height:30px;background:#ebebeb"></div>
<div class="a" style="left:610px;top:1786px;width:48px;height:30px;background:#ebebeb"></div>
<div class="a" style="left:1107px;top:1786px;width:16px;height:30px;background:#ebebeb"></div>
<div class="a" style="left:658px;top:1786px;width:48px;height:30px;background:#ebebeb"></div>
<div class="a" style="left:1123px;top:1786px;width:16px;height:30px;background:#ebebeb"></div>
<div class="a" style="left:706px;top:1786px;width:48px;height:30px;background:#b4d5fe"></div>
<div class="a" style="left:1139px;top:1786px;width:16px;height:30px;background:#b4d5fe"></div>
<div class="a" style="left:754px;top:1786px;width:48px;height:30px;background:#b4d5fe"></div>
<div class="a" style="left:1155px;top:1786px;width:16px;height:30px;background:#b4d5fe"></div>
<div class="a" style="left:802px;top:1786px;width:48px;height:30px;background:#b4d5fe"></div>
<div class="a" style="left:1171px;top:1786px;width:16px;height:30px;background:#b4d5fe"></div>
<div class="a" style="left:850px;top:1786px;width:32px;height:30px;background:#b4d5fe"></div>
<div class="a" style="left:1187px;top:1786px;width:16px;height:30px;background:#b4d5fe"></div>
<div class="m hx" style="left:18px;top:1782px;color:#4a4a4a">0020</div>
<div class="m hx" style="left:113.5px;top:1782px;color:#1f1f1f">00</div>
<div class="m hx" style="left:930.5px;top:1782px;color:#1f1f1f">·</div>
<div class="m hx" style="left:161.5px;top:1782px;color:#1f1f1f">00</div>
<div class="m hx" style="left:946.5px;top:1782px;color:#1f1f1f">·</div>
<div class="m hx" style="left:209.5px;top:1782px;color:#1f1f1f">00</div>
<div class="m hx" style="left:962.5px;top:1782px;color:#1f1f1f">·</div>
<div class="m hx" style="left:257.5px;top:1782px;color:#1f1f1f">00</div>
<div class="m hx" style="left:978.5px;top:1782px;color:#1f1f1f">·</div>
<div class="m hx" style="left:305.5px;top:1782px;color:#1f1f1f">b0</div>
<div class="m hx" style="left:994.5px;top:1782px;color:#1f1f1f">·</div>
<div class="m hx" style="left:353.5px;top:1782px;color:#1f1f1f">02</div>
<div class="m hx" style="left:1010.5px;top:1782px;color:#1f1f1f">·</div>
<div class="m hx" style="left:401.5px;top:1782px;color:#1f1f1f">ff</div>
<div class="m hx" style="left:1026.5px;top:1782px;color:#1f1f1f">·</div>
<div class="m hx" style="left:449.5px;top:1782px;color:#1f1f1f">ff</div>
<div class="m hx" style="left:1042.5px;top:1782px;color:#1f1f1f">·</div>
<div class="m hx" style="left:513.5px;top:1782px;color:#1f1f1f">fe</div>
<div class="m hx" style="left:1074.5px;top:1782px;color:#1f1f1f">·</div>
<div class="m hx" style="left:561.5px;top:1782px;color:#1f1f1f">34</div>
<div class="m hx" style="left:1090.5px;top:1782px;color:#1f1f1f">4</div>
<div class="m hx" style="left:609.5px;top:1782px;color:#1f1f1f">00</div>
<div class="m hx" style="left:1106.5px;top:1782px;color:#1f1f1f">·</div>
<div class="m hx" style="left:657.5px;top:1782px;color:#1f1f1f">00</div>
<div class="m hx" style="left:1122.5px;top:1782px;color:#1f1f1f">·</div>
<div class="m hx" style="left:705.5px;top:1782px;color:#1f1f1f">02</div>
<div class="m hx" style="left:1138.5px;top:1782px;color:#1f1f1f">·</div>
<div class="m hx" style="left:753.5px;top:1782px;color:#1f1f1f">04</div>
<div class="m hx" style="left:1154.5px;top:1782px;color:#1f1f1f">·</div>
<div class="m hx" style="left:801.5px;top:1782px;color:#1f1f1f">3f</div>
<div class="m hx" style="left:1170.5px;top:1782px;color:#1f1f1f">?</div>
<div class="m hx" style="left:849.5px;top:1782px;color:#1f1f1f">d8</div>
<div class="m hx" style="left:1186.5px;top:1782px;color:#1f1f1f">·</div>
<div class="a" style="left:114px;top:1816px;width:48px;height:30px;background:#ebebeb"></div>
<div class="a" style="left:931px;top:1816px;width:16px;height:30px;background:#ebebeb"></div>
<div class="a" style="left:162px;top:1816px;width:48px;height:30px;background:#ebebeb"></div>
<div class="a" style="left:947px;top:1816px;width:16px;height:30px;background:#ebebeb"></div>
<div class="a" style="left:210px;top:1816px;width:48px;height:30px;background:#ebebeb"></div>
<div class="a" style="left:963px;top:1816px;width:16px;height:30px;background:#ebebeb"></div>
<div class="a" style="left:258px;top:1816px;width:48px;height:30px;background:#ebebeb"></div>
<div class="a" style="left:979px;top:1816px;width:16px;height:30px;background:#ebebeb"></div>
<div class="a" style="left:306px;top:1816px;width:48px;height:30px;background:#ebebeb"></div>
<div class="a" style="left:995px;top:1816px;width:16px;height:30px;background:#ebebeb"></div>
<div class="a" style="left:354px;top:1816px;width:48px;height:30px;background:#ebebeb"></div>
<div class="a" style="left:1011px;top:1816px;width:16px;height:30px;background:#ebebeb"></div>
<div class="a" style="left:402px;top:1816px;width:48px;height:30px;background:#ebebeb"></div>
<div class="a" style="left:1027px;top:1816px;width:16px;height:30px;background:#ebebeb"></div>
<div class="a" style="left:450px;top:1816px;width:64px;height:30px;background:#ebebeb"></div>
<div class="a" style="left:1043px;top:1816px;width:32px;height:30px;background:#ebebeb"></div>
<div class="a" style="left:514px;top:1816px;width:48px;height:30px;background:#ebebeb"></div>
<div class="a" style="left:1075px;top:1816px;width:16px;height:30px;background:#ebebeb"></div>
<div class="a" style="left:562px;top:1816px;width:48px;height:30px;background:#ebebeb"></div>
<div class="a" style="left:1091px;top:1816px;width:16px;height:30px;background:#ebebeb"></div>
<div class="a" style="left:610px;top:1816px;width:48px;height:30px;background:#ebebeb"></div>
<div class="a" style="left:1107px;top:1816px;width:16px;height:30px;background:#ebebeb"></div>
<div class="a" style="left:658px;top:1816px;width:48px;height:30px;background:#ebebeb"></div>
<div class="a" style="left:1123px;top:1816px;width:16px;height:30px;background:#ebebeb"></div>
<div class="a" style="left:706px;top:1816px;width:48px;height:30px;background:#ebebeb"></div>
<div class="a" style="left:1139px;top:1816px;width:16px;height:30px;background:#ebebeb"></div>
<div class="a" style="left:754px;top:1816px;width:48px;height:30px;background:#ebebeb"></div>
<div class="a" style="left:1155px;top:1816px;width:16px;height:30px;background:#ebebeb"></div>
<div class="a" style="left:802px;top:1816px;width:48px;height:30px;background:#ebebeb"></div>
<div class="a" style="left:1171px;top:1816px;width:16px;height:30px;background:#ebebeb"></div>
<div class="a" style="left:850px;top:1816px;width:32px;height:30px;background:#ebebeb"></div>
<div class="a" style="left:1187px;top:1816px;width:16px;height:30px;background:#ebebeb"></div>
<div class="m hx" style="left:18px;top:1812px;color:#9a9a9a">0030</div>
<div class="m hx" style="left:113.5px;top:1812px;color:#1f1f1f">01</div>
<div class="m hx" style="left:930.5px;top:1812px;color:#1f1f1f">·</div>
<div class="m hx" style="left:161.5px;top:1812px;color:#1f1f1f">03</div>
<div class="m hx" style="left:946.5px;top:1812px;color:#1f1f1f">·</div>
<div class="m hx" style="left:209.5px;top:1812px;color:#1f1f1f">03</div>
<div class="m hx" style="left:962.5px;top:1812px;color:#1f1f1f">·</div>
<div class="m hx" style="left:257.5px;top:1812px;color:#1f1f1f">06</div>
<div class="m hx" style="left:978.5px;top:1812px;color:#1f1f1f">·</div>
<div class="m hx" style="left:305.5px;top:1812px;color:#1f1f1f">01</div>
<div class="m hx" style="left:994.5px;top:1812px;color:#1f1f1f">·</div>
<div class="m hx" style="left:353.5px;top:1812px;color:#1f1f1f">01</div>
<div class="m hx" style="left:1010.5px;top:1812px;color:#1f1f1f">·</div>
<div class="m hx" style="left:401.5px;top:1812px;color:#1f1f1f">08</div>
<div class="m hx" style="left:1026.5px;top:1812px;color:#1f1f1f">·</div>
<div class="m hx" style="left:449.5px;top:1812px;color:#1f1f1f">0a</div>
<div class="m hx" style="left:1042.5px;top:1812px;color:#1f1f1f">·</div>
<div class="m hx" style="left:513.5px;top:1812px;color:#1f1f1f">3c</div>
<div class="m hx" style="left:1074.5px;top:1812px;color:#1f1f1f">&lt;</div>
<div class="m hx" style="left:561.5px;top:1812px;color:#1f1f1f">8f</div>
<div class="m hx" style="left:1090.5px;top:1812px;color:#1f1f1f">·</div>
<div class="m hx" style="left:609.5px;top:1812px;color:#1f1f1f">20</div>
<div class="m hx" style="left:1106.5px;top:1812px;color:#1f1f1f"> </div>
<div class="m hx" style="left:657.5px;top:1812px;color:#1f1f1f">8a</div>
<div class="m hx" style="left:1122.5px;top:1812px;color:#1f1f1f">·</div>
<div class="m hx" style="left:705.5px;top:1812px;color:#1f1f1f">00</div>
<div class="m hx" style="left:1138.5px;top:1812px;color:#1f1f1f">·</div>
<div class="m hx" style="left:753.5px;top:1812px;color:#1f1f1f">00</div>
<div class="m hx" style="left:1154.5px;top:1812px;color:#1f1f1f">·</div>
<div class="m hx" style="left:801.5px;top:1812px;color:#1f1f1f">00</div>
<div class="m hx" style="left:1170.5px;top:1812px;color:#1f1f1f">·</div>
<div class="m hx" style="left:849.5px;top:1812px;color:#1f1f1f">00</div>
<div class="m hx" style="left:1186.5px;top:1812px;color:#1f1f1f">·</div>
<div class="a" style="left:114px;top:1846px;width:48px;height:30px;background:#ebebeb"></div>
<div class="a" style="left:931px;top:1846px;width:16px;height:30px;background:#ebebeb"></div>
<div class="a" style="left:162px;top:1846px;width:48px;height:30px;background:#ebebeb"></div>
<div class="a" style="left:947px;top:1846px;width:16px;height:30px;background:#ebebeb"></div>
<div class="a" style="left:210px;top:1846px;width:48px;height:30px;background:#ebebeb"></div>
<div class="a" style="left:963px;top:1846px;width:16px;height:30px;background:#ebebeb"></div>
<div class="a" style="left:258px;top:1846px;width:32px;height:30px;background:#ebebeb"></div>
<div class="a" style="left:979px;top:1846px;width:16px;height:30px;background:#ebebeb"></div>
<div class="m hx" style="left:18px;top:1842px;color:#9a9a9a">0040</div>
<div class="m hx" style="left:113.5px;top:1842px;color:#1f1f1f">04</div>
<div class="m hx" style="left:930.5px;top:1842px;color:#1f1f1f">·</div>
<div class="m hx" style="left:161.5px;top:1842px;color:#1f1f1f">02</div>
<div class="m hx" style="left:946.5px;top:1842px;color:#1f1f1f">·</div>
<div class="m hx" style="left:209.5px;top:1842px;color:#1f1f1f">00</div>
<div class="m hx" style="left:962.5px;top:1842px;color:#1f1f1f">·</div>
<div class="m hx" style="left:257.5px;top:1842px;color:#1f1f1f">00</div>
<div class="m hx" style="left:978.5px;top:1842px;color:#1f1f1f">·</div>
<div class="a" style="left:0;top:1974px;width:2858px;height:2px;background:#b9b9b9"></div>
<div class="a" style="left:0;top:1976px;width:2858px;height:54px;background:linear-gradient(#e9e9e9,#c4c4c4);border-top:1px solid #8a8a8a;border-radius:0 0 10px 10px"></div>
<div class="a" style="left:20px;top:1988px;width:28px;height:28px;border-radius:50%;background:radial-gradient(circle at 40% 30%,#f09090,#e05858);border:2px solid #7a3434"></div>
<div class="s" style="left:139px;top:1990px;font-size:23px;line-height:30px;color:#000;letter-spacing:0.18px">TCP Option - Maximum segment size (tcp.options.mss), 4 bytes</div>
<div class="a" style="left:1865px;top:1998px;width:12px;height:12px;border-radius:50%;background:radial-gradient(circle at 50% 40%,#b8b8b8,#a0a0a0)"></div>
<div class="s" style="left:1899px;top:1990px;font-size:23px;line-height:30px;color:#000">Packets: 4557 · Displayed: 452 (9.9%)</div>
<div class="a" style="left:2639px;top:1998px;width:12px;height:12px;border-radius:50%;background:radial-gradient(circle at 50% 40%,#b8b8b8,#a0a0a0)"></div>
<svg class="a" style="left:60px;top:1980px" width="45" height="45" viewBox="60 1980 45 45"><rect x="71.5" y="1988.5" width="21" height="26.5" fill="#f0f0e8" stroke="#c8c8c8" stroke-width="1"/><rect x="71.5" y="1988.5" width="21" height="6" fill="#45a3e0"/><path d="M77 1994.5 Q79 1990 82 1989 Q80.5 1992 81 1994.5 Z" fill="#e8f2f8"/><text x="73.5" y="2000" font-family="Liberation Mono" font-size="5" fill="#bbb">00101</text><text x="73.5" y="2006" font-family="Liberation Mono" font-size="5" fill="#bbb">00110</text><text x="73.5" y="2012" font-family="Liberation Mono" font-size="5" fill="#bbb">01100</text><path d="M82.5 2003.5 L95 1991" stroke="#555" stroke-width="5.2" stroke-linecap="butt"/><path d="M93.8 1989.8 L96.2 1992.2" stroke="#555" stroke-width="5.2" stroke-linecap="round"/><path d="M78.2 2007.8 L80.2 2000.8 L85.2 2005.8 Z" fill="#111"/></svg>
<div class="s" style="left:2673px;top:1990px;font-size:23px;line-height:30px;color:#000;letter-spacing:0.2px">Profile: Default</div>
</body></html>
